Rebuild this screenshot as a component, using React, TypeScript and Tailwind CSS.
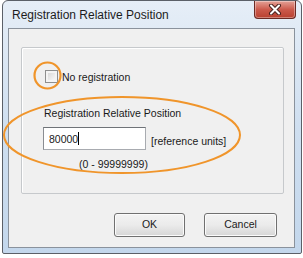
import React from "react";

const font = { fontFamily: '"Liberation Sans", Arial, sans-serif' };

export default function App() {
  return (
    <div className="relative w-[303px] h-[258px] bg-white" style={font}>
      <div className="ml-[2px] w-[300px] h-[254px] border border-[#5b6068] rounded-t-[6px] rounded-b-[2px] bg-gradient-to-b from-[#e6eef7] via-[#cfdff0] to-[#c3d7ec] flex flex-col overflow-hidden">
        {/* title bar */}
        <div className="h-[27px] flex items-start justify-between shrink-0">
          <div className="pl-[9px] pt-[7px] text-[12px] leading-[14px] text-[#1c1c1c]">
            Registration Relative Position
          </div>
          <div className="mr-[5px] w-[42px] h-[18px] border border-t-0 border-[#6b2a24] rounded-b-[4px] bg-gradient-to-b from-[#e3a197] via-[#cc5a4c] to-[#b8402f] flex items-center justify-center shadow-[inset_0_0_0_1px_rgba(255,255,255,0.35)]">
            <svg width="14" height="11" viewBox="0 0 14 11">
              <path d="M3 1.5 L11 9.5 M11 1.5 L3 9.5" stroke="#4a2320" strokeWidth="4" strokeLinecap="round" />
              <path d="M3 1.5 L11 9.5 M11 1.5 L3 9.5" stroke="#ffffff" strokeWidth="2" strokeLinecap="round" />
            </svg>
          </div>
        </div>
        {/* client area */}
        <div className="ml-[5px] mr-[6px] h-[220px] border border-[#8a929c] bg-[#f0f0f0] pt-[18px] pl-[12px] pr-[10px] flex flex-col">
          <div className="h-[147px] border border-[#c6c9cc] rounded-[2px] shadow-[inset_1px_1px_0_#ffffff] flex flex-col text-[10.5px] leading-[12px] text-[#1a1a1a]">
            <div className="mt-[22px] ml-[23px] flex items-center gap-[4px] h-[13px]">
              <div className="w-[13px] h-[13px] border border-[#8e8f8f] bg-[#f4f4f4] p-[2px]">
                <div className="w-full h-full bg-gradient-to-br from-[#dadada] to-[#f8f8f8]" />
              </div>
              <span>No registration</span>
            </div>
            <div className="mt-[24px] ml-[22px]">Registration Relative Position</div>
            <div className="mt-[8px] ml-[21px] flex items-end">
              <div className="w-[103px] h-[23px] border border-[#a8abb0] border-t-[#6f7378] border-l-[#8a8d92] bg-white flex items-center pl-[5px]">
                <span>80000</span>
                <span className="w-[1px] h-[13px] bg-black" />
              </div>
              <span className="ml-[5px] mb-[3px]">[reference units]</span>
            </div>
            <div className="mt-[8px] ml-[57px]">(0 - 99999999)</div>
          </div>
          <div className="mt-[19px] flex justify-end gap-[19px] pr-[7px] text-[10.5px] text-[#1a1a1a]">
            <div className="w-[71px] h-[24px] border border-[#707070] rounded-[3px] bg-gradient-to-b from-[#f3f3f3] via-[#ebebeb] to-[#d6d6d6] shadow-[inset_0_0_0_1px_#fbfbfb] flex items-center justify-center">
              OK
            </div>
            <div className="w-[73px] h-[24px] border border-[#707070] rounded-[3px] bg-gradient-to-b from-[#f3f3f3] via-[#ebebeb] to-[#d6d6d6] shadow-[inset_0_0_0_1px_#fbfbfb] flex items-center justify-center">
              Cancel
            </div>
          </div>
        </div>
      </div>
      {/* annotation overlay */}
      <svg className="absolute left-0 top-0 pointer-events-none" width="303" height="258" viewBox="0 0 303 258">
        <circle cx="47.5" cy="75.5" r="13" fill="none" stroke="#f0952b" strokeWidth="2.2" />
        <ellipse cx="122" cy="135" rx="118" ry="38" fill="none" stroke="#f0952b" strokeWidth="2" />
      </svg>
    </div>
  );
}
